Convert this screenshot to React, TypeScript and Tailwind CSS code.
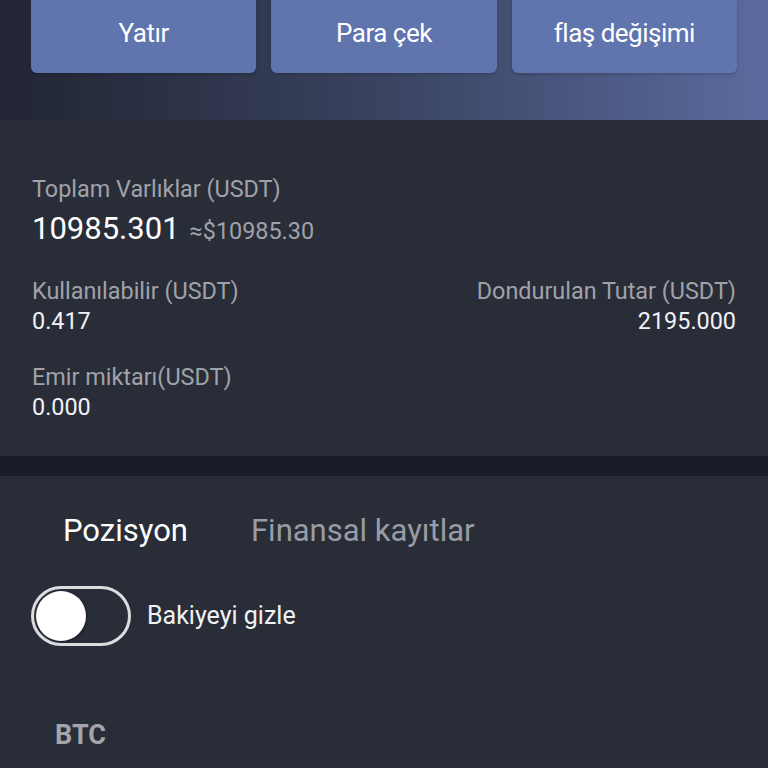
import React, { useState } from 'react';

const ACTIONS = ['Yatır', 'Para çek', 'flaş değişimi'];

const App: React.FC = () => {
    const [hidden, setHidden] = useState(false);
    const [tab, setTab] = useState<'pos' | 'fin'>('pos');

    return (
        <div className="min-h-[768px] bg-[#292d38] text-[#f1f2f4] overflow-hidden" style={{ fontFamily: 'Roboto, "Noto Sans", sans-serif' }}>
            {/* header with actions */}
            <div className="h-[120px] flex flex-col bg-gradient-to-r from-[#212534] via-[#3a4360] to-[#5b6b9f] px-[31px]">
                <div className="grid grid-cols-3 gap-[15px] -mt-[8px]">
                    {ACTIONS.map((a) => (
                        <button
                            key={a}
                            className="h-[81px] rounded-[6px] bg-[#6074ad] text-[26px] tracking-[-0.5px] text-white pt-[2px] shadow-[0_2px_3px_rgba(0,0,0,0.15)]"
                        >
                            {a}
                        </button>
                    ))}
                </div>
            </div>

            {/* balances */}
            <div className="px-[32px] pt-[54px] pb-[34px] text-[23.4px] leading-[30px]">
                <p className="text-[#a0a2a9]">Toplam Varlıklar (USDT)</p>
                <div className="flex items-baseline gap-[10px] mt-[7px]">
                    <span className="text-[31px] leading-[36px] text-white">10985.301</span>
                    <span className="text-[#a0a2a9]">≈$10985.30</span>
                </div>
                <div className="flex justify-between mt-[29px]">
                    <div>
                        <p className="text-[#a0a2a9]">Kullanılabilir (USDT)</p>
                        <p>0.417</p>
                    </div>
                    <div className="text-right">
                        <p className="text-[#a0a2a9]">Dondurulan Tutar (USDT)</p>
                        <p>2195.000</p>
                    </div>
                </div>
                <div className="mt-[26px]">
                    <p className="text-[#a0a2a9]">Emir miktarı(USDT)</p>
                    <p>0.000</p>
                </div>
            </div>

            <div className="h-[20px] bg-[#1a1c27]" />

            {/* tabs */}
            <div className="px-[63px] pt-[36px] flex gap-[63px] text-[31px] leading-[38px]">
                <button onClick={() => setTab('pos')} className={tab === 'pos' ? 'text-white' : 'text-[#9a9ca3]'}>
                    Pozisyon
                </button>
                <button onClick={() => setTab('fin')} className={tab === 'fin' ? 'text-white' : 'text-[#9a9ca3]'}>
                    Finansal kayıtlar
                </button>
            </div>

            <div className="px-[31px] mt-[36px] flex items-center gap-[16px]">
                <button
                    onClick={() => setHidden(!hidden)}
                    className={`w-[100px] h-[60px] rounded-full border-[3px] border-[#dcdcdf] p-[2px] flex ${hidden ? 'justify-end bg-[#6074ad]' : 'justify-start bg-[#292d38]'}`}
                >
                    <span className="w-[50px] h-[50px] rounded-full bg-white shadow-[1px_1px_2px_rgba(0,0,0,0.35)]" />
                </button>
                <span className="text-[25px]">Bakiyeyi gizle</span>
            </div>

            <div className="px-[55px] mt-[73px] text-[27px] leading-[32px] font-bold text-[#a3a5ab]">BTC</div>
        </div>
    );
};

export default App;
